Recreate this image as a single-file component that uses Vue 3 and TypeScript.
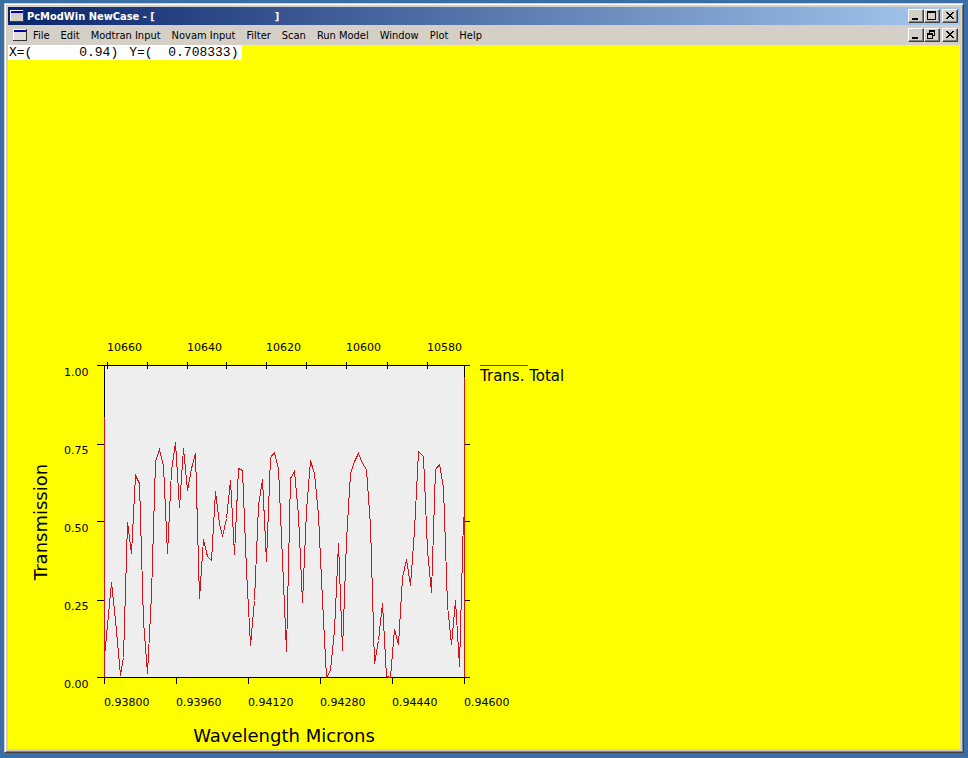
<script setup lang="ts">
interface Tick {
  pos: number
  label: string
}

const menus: string[] = [
  'File', 'Edit', 'Modtran Input', 'Novam Input', 'Filter',
  'Scan', 'Run Model', 'Window', 'Plot', 'Help',
]

const cursor = { x: '0.94', y: '0.708333' }
const readout: string[] = [
  `X=(${cursor.x.padStart(10)})`,
  `Y=(${cursor.y.padStart(10)})`,
]

const plot = { left: 104, right: 464, top: 365, bottom: 677 }

const wavelengthTicks: Tick[] = ['0.93800', '0.93960', '0.94120', '0.94280', '0.94440', '0.94600']
  .map((label, i) => ({ label, pos: plot.left + i * 72 }))

const transmissionTicks: Tick[] = [
  { label: '1.00', pos: 365 },
  { label: '0.75', pos: 444 },
  { label: '0.50', pos: 521 },
  { label: '0.25', pos: 600 },
  { label: '0.00', pos: 677 },
]

const wavenumberTicks: Tick[] = [
  { label: '10660', pos: 107 },
  { label: '', pos: 147 },
  { label: '10640', pos: 187 },
  { label: '', pos: 226 },
  { label: '10620', pos: 266 },
  { label: '', pos: 306 },
  { label: '10600', pos: 346 },
  { label: '', pos: 387 },
  { label: '10580', pos: 427 },
]

const spectrum: [number, number][] = [
  [104, 656], [108, 614], [111, 582], [115, 620], [120, 675], [123, 657], [127, 522], [131, 553],
  [135, 475], [139, 483], [143, 621], [147, 673], [151, 594], [155, 461], [159, 449], [163, 465],
  [167, 553], [171, 470], [175, 442], [179, 507], [183, 448], [187, 490], [191, 468], [195, 453],
  [199, 598], [203, 539], [207, 556], [211, 560], [215, 491], [219, 523], [222, 536], [226, 518],
  [230, 480], [234, 554], [238, 468], [242, 470], [246, 570], [250, 645], [254, 600], [258, 505],
  [262, 479], [266, 561], [270, 457], [274, 452], [278, 468], [282, 560], [286, 651], [290, 478],
  [294, 471], [298, 515], [302, 602], [306, 510], [310, 460], [314, 473], [318, 515], [322, 600],
  [326, 677], [330, 670], [334, 630], [338, 543], [342, 650], [346, 540], [350, 473], [354, 461],
  [358, 453], [362, 463], [366, 469], [370, 525], [374, 663], [378, 640], [382, 603], [386, 676],
  [390, 677], [394, 629], [398, 644], [402, 577], [406, 559], [410, 585], [414, 530], [418, 451],
  [423, 456], [427, 550], [431, 592], [435, 469], [439, 464], [443, 487], [447, 605], [451, 644],
  [455, 600], [459, 666], [463, 517],
]
const curve: string = spectrum.map(([x, y]) => `${x},${y}`).join(' ')
</script>

<template>
  <div class="desktop">
    <main class="window">
      <header class="titlebar">
        <svg class="app-icon" width="14" height="12" viewBox="0 0 14 12" aria-hidden="true">
          <path d="M0 0h14v12H0z" fill="#404040" />
          <path d="M0 0h13v11H0z" fill="#fff" />
          <path d="M1 1h12v10H1z" fill="#d4d0c8" />
          <path d="M1 1h12v2H1z" fill="#0000b0" />
        </svg>
        <h1 class="title">PcModWin NewCase - [<span class="case-name"></span>]</h1>
        <div class="controls">
          <button type="button" class="control" aria-label="Minimize">
            <svg width="12" height="10" viewBox="0 0 12 10"><path d="M2 7h6v2H2z" /></svg>
          </button>
          <button type="button" class="control" aria-label="Maximize">
            <svg width="12" height="10" viewBox="0 0 12 10"><path d="M1 0h9v9H1zM2 2v6h7V2z" fill-rule="evenodd" /></svg>
          </button>
          <button type="button" class="control close" aria-label="Close">
            <svg width="12" height="10" viewBox="0 0 12 10"><path d="M2 1h2v1h1v1h2V2h1V1h2v1H9v1H8v1H7v1h1v1h1v1h1v1H8V7H7V6H5v1H4v1H2V7h1V6h1V5h1V4H4V3H3V2H2z" /></svg>
          </button>
        </div>
      </header>

      <nav class="menubar">
        <svg class="app-icon" width="14" height="12" viewBox="0 0 14 12" aria-hidden="true">
          <path d="M0 0h14v12H0z" fill="#303030" />
          <path d="M0 0h13v11H0z" fill="#fff" />
          <path d="M1 1h12v10H1z" fill="#e0ded8" />
          <path d="M1 1h12v2H1z" fill="#0000b0" />
        </svg>
        <div class="menus">
          <button v-for="menu in menus" :key="menu" type="button" class="menu">{{ menu }}</button>
        </div>
        <div class="controls">
          <button type="button" class="control" aria-label="Minimize document">
            <svg width="12" height="10" viewBox="0 0 12 10"><path d="M2 7h6v2H2z" /></svg>
          </button>
          <button type="button" class="control" aria-label="Restore document">
            <svg width="12" height="10" viewBox="0 0 12 10"><path d="M3 0h6v6H7v3H1V3h2zM4 2v1h3v2h1V2zM2 5v3h4V5z" fill-rule="evenodd" /></svg>
          </button>
          <button type="button" class="control close" aria-label="Close document">
            <svg width="12" height="10" viewBox="0 0 12 10"><path d="M2 1h2v1h1v1h2V2h1V1h2v1H9v1H8v1H7v1h1v1h1v1h1v1H8V7H7V6H5v1H4v1H2V7h1V6h1V5h1V4H4V3H3V2H2z" /></svg>
          </button>
        </div>
      </nav>

      <section class="client">
        <div class="readout">
          <span v-for="value in readout" :key="value">{{ value }}</span>
        </div>

        <svg class="chart" width="600" height="420" viewBox="8 329 600 420" role="img" aria-label="Transmission by wavelength">
          <rect :x="plot.left" :y="plot.top" :width="plot.right - plot.left" :height="plot.bottom - plot.top" fill="#eee" />

          <g class="axis">
            <path d="M97 365.5H470M97 677.5H470M104.5 365V683M464.5 365V683" />
            <path v-for="t in transmissionTicks" :key="t.label" :d="`M97 ${t.pos + 0.5}h8M464 ${t.pos + 0.5}h6`" />
            <path v-for="t in wavelengthTicks" :key="t.label" :d="`M${t.pos + 0.5} 677v7`" />
            <path v-for="t in wavenumberTicks" :key="t.pos" :d="`M${t.pos + 0.5} 362v7`" />
          </g>

          <g class="trace">
            <path d="M104.5 417V677M464.5 377V677M480 365.5h48" />
            <polyline :points="curve" transform="translate(0.5 0.5)" />
          </g>

          <g class="tick-label">
            <text v-for="t in wavenumberTicks" :key="t.pos" :x="t.pos" y="351">{{ t.label }}</text>
            <text v-for="t in wavelengthTicks" :key="t.label" :x="t.pos" y="706">{{ t.label }}</text>
            <text v-for="(t, i) in transmissionTicks" :key="t.label" x="64" :y="376 + i * 78">{{ t.label }}</text>
          </g>
          <text class="legend" x="480" y="381">Trans. Total</text>
          <text class="axis-title" x="284" y="742">Wavelength Microns</text>
          <text class="axis-title" transform="translate(47 522) rotate(-90)">Transmission</text>
        </svg>
      </section>
    </main>
  </div>
</template>

<style>
body {
  margin: 0;
  background: #3a6ea5;
}
</style>

<style scoped>
.desktop {
  box-sizing: border-box;
  display: flex;
  min-height: 100vh;
  padding: 3px 4px 5px;
  background: #3a6ea5;
  font-family: "DejaVu Sans Condensed", "DejaVu Sans", sans-serif;
  font-size: 11px;
}

.window {
  display: flex;
  flex: 1;
  flex-direction: column;
  min-width: 0;
  padding: 3px;
  border: 1px solid;
  border-color: #d4d0c8 #404040 #404040 #d4d0c8;
  background: #d4d0c8;
  box-shadow: inset 1px 1px #fff, inset -1px -1px #808080;
}

.titlebar,
.menubar {
  display: flex;
  align-items: center;
  padding: 0 2px;
}

.titlebar {
  height: 18px;
  background: linear-gradient(to right, #0a246a, #a6caf0);
}

.menubar {
  height: 20px;
  padding-left: 5px;
}

.app-icon {
  flex: none;
}

.title {
  display: flex;
  flex: 1;
  margin: 0 0 0 3px;
  color: #fff;
  font-size: 11px;
  font-weight: bold;
  white-space: pre;
}

.case-name {
  width: 120px;
}

.menus {
  display: flex;
  flex: 1;
  gap: 11px;
  margin-left: 6px;
}

.menu {
  padding: 0;
  border: 0;
  background: none;
  color: #000;
  font: inherit;
  white-space: nowrap;
}

.controls {
  display: flex;
}

.control {
  display: flex;
  box-sizing: border-box;
  width: 16px;
  height: 14px;
  padding: 1px;
  border: 1px solid;
  border-color: #fff #404040 #404040 #fff;
  background: #d4d0c8;
  box-shadow: inset -1px -1px #808080;
}

.control.close {
  margin-left: 2px;
}

.client {
  display: flex;
  flex: 1;
  flex-direction: column;
  align-items: flex-start;
  background: #ff0;
}

.readout {
  display: flex;
  gap: 11px;
  padding: 0 4px 0 1px;
  background: #fff;
  font-family: "Liberation Mono", monospace;
  font-size: 13px;
  line-height: 15px;
  white-space: pre;
}

.chart {
  display: block;
  max-width: 100%;
  margin-top: auto;
  font-family: "DejaVu Sans", sans-serif;
}

.axis {
  fill: none;
  stroke: #000;
  shape-rendering: crispEdges;
}

.trace {
  fill: none;
  stroke: #d81018;
  shape-rendering: crispEdges;
}

.tick-label {
  font-size: 11px;
}

.legend {
  font-size: 15px;
}

.axis-title {
  font-size: 18px;
  text-anchor: middle;
}
</style>
